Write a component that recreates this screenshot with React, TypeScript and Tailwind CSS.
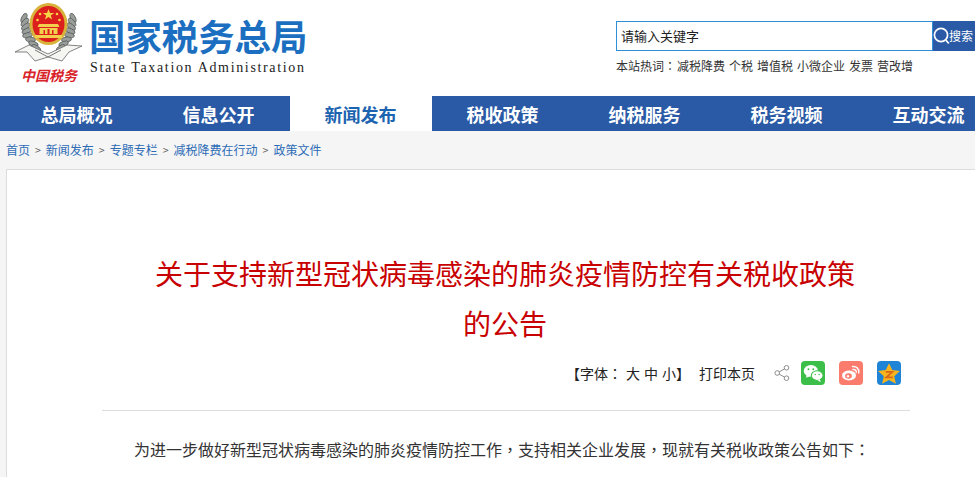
import React from 'react';

const FONT = "font-['Microsoft_YaHei','Noto_Sans_CJK_SC','Liberation_Sans',sans-serif]";

const NAV_ITEMS = ['总局概况', '信息公开', '新闻发布', '税收政策', '纳税服务', '税务视频', '互动交流'];
const HOT_WORDS = ['减税降费', '个税', '增值税', '小微企业', '发票', '营改增'];
const CRUMBS = ['首页', '新闻发布', '专题专栏', '减税降费在行动', '政策文件'];

// centred full-width punctuation, as in the reference
const Punct = ({ children }: { children: React.ReactNode }) => (
  <span className="font-['Noto_Sans_CJK_TC',sans-serif]">{children}</span>
);

const Emblem = () => (
  <svg width="68" height="62" viewBox="0 0 68 62" className="block">
    {/* wheat wreath */}
    <g fill="#9a9e9b" stroke="#4f5452" strokeWidth="0.7">
      {[0, 1, 2, 3, 4, 5, 6, 7].map(i => (
        <ellipse key={`l${i}`} cx={9 + i * 0.9 + (i > 4 ? (i - 4) * 2 : 0)} cy={16 + i * 4.3} rx="5" ry="2.4" transform={`rotate(${-65 + i * 14} ${9 + i * 0.9 + (i > 4 ? (i - 4) * 2 : 0)} ${16 + i * 4.3})`} />
      ))}
      {[0, 1, 2, 3, 4, 5, 6, 7].map(i => (
        <ellipse key={`r${i}`} cx={58 - i * 0.9 - (i > 4 ? (i - 4) * 2 : 0)} cy={16 + i * 4.3} rx="5" ry="2.4" transform={`rotate(${65 - i * 14} ${58 - i * 0.9 - (i > 4 ? (i - 4) * 2 : 0)} ${16 + i * 4.3})`} />
      ))}
    </g>
    {/* ribbon */}
    <path d="M0 50 L14 43 L33 52 L52 43 L67 44 L54 50 L47 59 L33 55 L20 59 L12 50 Z" fill="#f5f5f2" stroke="#666" strokeWidth="0.8" />
    <path d="M20 48 L33 55 L46 48" fill="none" stroke="#777" strokeWidth="1" />
    {/* gold ring + red disc */}
    <ellipse cx="33.5" cy="22" rx="19" ry="21" fill="#d9b23c" />
    <ellipse cx="33.5" cy="22" rx="16" ry="18" fill="#dc1f1c" />
    {/* stars */}
    <polygon points="33.5,7 35,11 39.2,11 35.8,13.5 37.1,17.5 33.5,15 29.9,17.5 31.2,13.5 27.8,11 32,11" fill="#f6d348" />
    <g fill="#f6d348">
      <circle cx="25" cy="12" r="1.3" />
      <circle cx="42" cy="12" r="1.3" />
      <circle cx="22.5" cy="18" r="1.3" />
      <circle cx="44.5" cy="18" r="1.3" />
    </g>
    {/* gate */}
    <path d="M24 22 H43 L44.5 25 H22.5 Z M24.5 26 H42.5 V32 H24.5 Z" fill="#f2cf4c" />
    <path d="M20 33 H47 V36 H20 Z" fill="#f2cf4c" />
    <path d="M32.5 27 H34.5 V32 H32.5 Z M28.5 28 H30 V32 H28.5 Z M37 28 H38.5 V32 H37 Z" fill="#dc1f1c" />
  </svg>
);

const SearchGlass = () => (
  <svg width="17" height="18" viewBox="0 0 17 18" fill="none" stroke="#fff" strokeWidth="1.7">
    <circle cx="8" cy="8" r="6.6" />
    <path d="M12.8 13 L15.8 16.5" />
  </svg>
);

const ShareIcon = () => (
  <svg width="16" height="16" viewBox="0 0 16 16" fill="none" stroke="#8d8d8d" strokeWidth="1">
    <circle cx="3.2" cy="8" r="2.3" />
    <circle cx="12.5" cy="2.8" r="2.3" />
    <circle cx="12.5" cy="13.2" r="2.3" />
    <path d="M5.2 6.9 L10.5 3.9 M5.2 9.1 L10.5 12.1" />
  </svg>
);

const WechatIcon = () => (
  <div className="w-6 h-6 rounded-sm bg-[#3cbf48] flex items-center justify-center">
    <svg width="21" height="19" viewBox="0 0 20 18" fill="#fff">
      <ellipse cx="7.5" cy="6.5" rx="6.8" ry="5.6" />
      <path d="M3.5 10 L3 13 L6.5 11.5 Z" />
      <ellipse cx="13.5" cy="11" rx="5.6" ry="4.6" stroke="#3cbf48" strokeWidth="1" />
      <path d="M16 14.5 L17 17 L13.8 15.5 Z" />
      <g fill="#3cbf48">
        <circle cx="5.2" cy="5" r="0.9" />
        <circle cx="9.8" cy="5" r="0.9" />
        <circle cx="11.6" cy="10" r="0.7" />
        <circle cx="15.4" cy="10" r="0.7" />
      </g>
    </svg>
  </div>
);

const WeiboIcon = () => (
  <div className="w-6 h-6 rounded-sm bg-[#fb7b6c] flex items-center justify-center">
    <svg width="20" height="18" viewBox="0 0 20 18">
      <ellipse cx="8" cy="11.5" rx="7" ry="5" fill="#fff" />
      <ellipse cx="7.5" cy="12" rx="3.4" ry="2.7" fill="#fb7b6c" />
      <circle cx="7" cy="12.3" r="1.2" fill="#fff" />
      <path d="M11.5 2.5 C15 2 18.5 4.5 17.8 9 M12 5.5 C14 5.2 15.7 6.5 15.2 8.5" fill="none" stroke="#fff" strokeWidth="1.4" strokeLinecap="round" />
    </svg>
  </div>
);

const QzoneIcon = () => (
  <div className="w-6 h-6 rounded-sm bg-[#1f83d6] flex items-center justify-center">
    <svg width="24" height="23" viewBox="0 0 22 21">
      <polygon points="11,1 14,7.4 21,8.2 15.8,13 17.3,20 11,16.4 4.7,20 6.2,13 1,8.2 8,7.4" fill="#f8b41c" />
      <path d="M8 9 H14 L8.5 14 H14.5" fill="none" stroke="#d9661a" strokeWidth="1.6" />
    </svg>
  </div>
);

export default function App() {
  return (
    <div className={`w-[975px] h-[477px] overflow-hidden bg-white ${FONT}`}>
      <div className="w-[1006px]">
        {/* Header */}
        <div className="h-[96px] flex justify-between">
          <div className="flex">
            <div className="w-[89px] pl-[15px] pt-[2px]">
              <Emblem />
              <div className="pl-[6px] mt-[1px] text-[14px] leading-[20px] font-bold italic text-[#d8232a] whitespace-nowrap">中国税务</div>
            </div>
            <div className="pt-[12px]">
              <div className="text-[36.4px] leading-[46px] font-bold text-[#1c6fc0] whitespace-nowrap">国家税务总局</div>
              <div className="ml-[1px] mt-[1px] text-[14px] leading-[18px] tracking-[1.66px] text-[#222] font-['Liberation_Serif',serif] whitespace-nowrap">State Taxation Administration</div>
            </div>
          </div>
          <div className="w-[390px] pt-[21px] shrink-0">
            <div className="flex h-[30px]">
              <div className="w-[317px] border border-[#2f8fd8] pl-[4px] text-[13px] leading-[28px] text-[#222]">请输入关键字</div>
              <div className="w-[60px] bg-[#2a5aa5] flex items-center text-white text-[12px]">
                <SearchGlass />
                <span className="-ml-[1px]">搜索</span>
              </div>
            </div>
            <div className="mt-[6px] flex text-[12px] leading-[18px] text-[#333] whitespace-nowrap">
              <span>本站热词<Punct>：</Punct></span>
              <span className="flex gap-[4px] ml-[1px]">
                {HOT_WORDS.map(w => <span key={w}>{w}</span>)}
              </span>
            </div>
          </div>
        </div>

        {/* Nav */}
        <div className="h-[35px] flex pl-[6px] bg-[#2a5aa5] -mr-[20px]">
          {NAV_ITEMS.map((item, i) => (
            <div
              key={item}
              className={`w-[142px] shrink-0 pr-[1px] text-center text-[18px] leading-[36px] font-bold ${i === 2 ? 'bg-white text-[#1c63b0]' : 'text-white'}`}
            >
              {item}
            </div>
          ))}
        </div>

        {/* Breadcrumb + article */}
        <div className="bg-[#f5f5f5] pl-[6px]">
          <div className="h-[38px] flex items-center gap-[5px] text-[12px] text-[#2d6cb5] whitespace-nowrap">
            {CRUMBS.map((c, i) => (
              <React.Fragment key={c}>
                {i > 0 && <span className="text-[#555] text-[10.5px]">&gt;</span>}
                <span>{c}</span>
              </React.Fragment>
            ))}
          </div>
          <div className="bg-white border border-[#ddd] h-[320px] px-[95px]">
            <h1 className="mt-[78px] pl-[49px] pr-[51px] text-center text-[28px] leading-[50px] font-normal text-[#c80000]">
              关于支持新型冠状病毒感染的肺炎疫情防控有关税收政策的公告
            </h1>
            <div className="mt-[10px] h-[53px] pb-[22px] border-b border-[#ddd] flex items-center justify-end pr-[9px] text-[14px] text-[#222] whitespace-nowrap">
              <span className="flex gap-[4px]">
                <span>【字体<Punct>：</Punct></span>
                <span>大</span>
                <span>中</span>
                <span>小】</span>
              </span>
              <span className="ml-[9px]">打印本页</span>
              <span className="ml-[19px]"><ShareIcon /></span>
              <span className="ml-[11px]"><WechatIcon /></span>
              <span className="ml-[14px]"><WeiboIcon /></span>
              <span className="ml-[14px]"><QzoneIcon /></span>
            </div>
            <p className="mt-[25px] text-[16px] leading-[26px] indent-[32px] text-[#333] whitespace-nowrap">
              为进一步做好新型冠状病毒感染的肺炎疫情防控工作<Punct>，</Punct>支持相关企业发展<Punct>，</Punct>现就有关税收政策公告如下<Punct>：</Punct>
            </p>
          </div>
        </div>
      </div>
    </div>
  );
}
